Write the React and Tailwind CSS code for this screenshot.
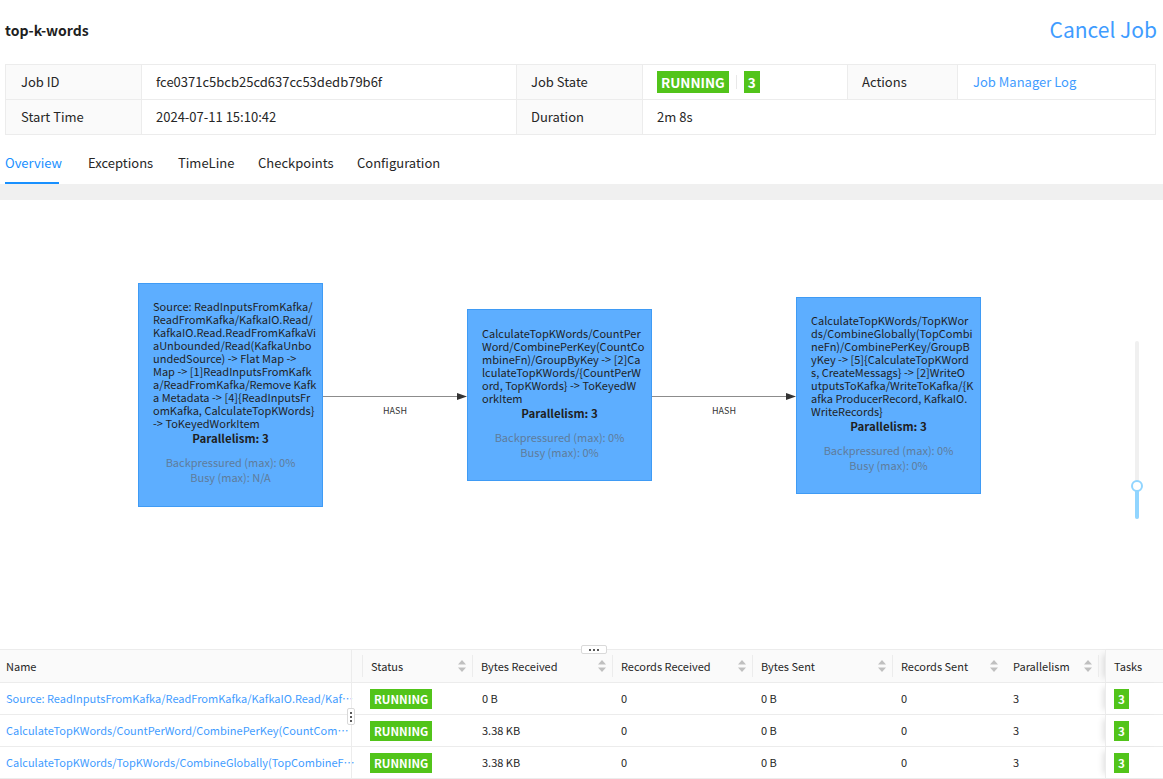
import React from 'react'

const NODES = [
  {
    w: 'w-[185px]',
    h: 'h-[224px]',
    pt: 'pt-[16px]',
    lines: [
      'Source: ReadInputsFromKafka/',
      'ReadFromKafka/KafkaIO.Read/',
      'KafkaIO.Read.ReadFromKafkaVi',
      'aUnbounded/Read(KafkaUnbo',
      'undedSource) -> Flat Map ->',
      'Map -> [1]ReadInputsFromKafk',
      'a/ReadFromKafka/Remove Kafk',
      'a Metadata -> [4]{ReadInputsFr',
      'omKafka, CalculateTopKWords}',
      '-> ToKeyedWorkItem',
    ],
    busy: 'N/A',
  },
  {
    w: 'w-[185px]',
    h: 'h-[172px]',
    pt: 'pt-[17px]',
    lines: [
      'CalculateTopKWords/CountPer',
      'Word/CombinePerKey(CountCo',
      'mbineFn)/GroupByKey -> [2]Ca',
      'lculateTopKWords/{CountPerW',
      'ord, TopKWords} -> ToKeyedW',
      'orkItem',
    ],
    busy: '0%',
  },
  {
    w: 'w-[185px]',
    h: 'h-[197px]',
    pt: 'pt-[16px]',
    lines: [
      'CalculateTopKWords/TopKWor',
      'ds/CombineGlobally(TopCombi',
      'neFn)/CombinePerKey/GroupB',
      'yKey -> [5]{CalculateTopKWord',
      's, CreateMessags} -> [2]WriteO',
      'utputsToKafka/WriteToKafka/{K',
      'afka ProducerRecord, KafkaIO.',
      'WriteRecords}',
    ],
    busy: '0%',
  },
]

const ROWS = [
  { name: 'Source: ReadInputsFromKafka/ReadFromKafka/KafkaIO.Read/KafkaIO.Read.ReadFromKafkaViaUnbounded/Read(KafkaUnboundedSource)', br: '0 B' },
  { name: 'CalculateTopKWords/CountPerWord/CombinePerKey(CountCombineFn)/GroupByKey', br: '3.38 KB' },
  { name: 'CalculateTopKWords/TopKWords/CombineGlobally(TopCombineFn)/CombinePerKey/GroupByKey', br: '3.38 KB' },
]

const COLS = 'grid grid-cols-[363px_110px_140px_140px_140px_112px_94px_6px_58px]'

function GraphNode({ node }) {
  return (
    <div className={`${node.w} ${node.h} ${node.pt} shrink-0 bg-[#5daeff] border border-[#3f9bf5] pl-[14px] pr-[4px] text-[11px] text-[#1f1f1f]`}>
      <div className="leading-[13px]">
        {node.lines.map((l) => (
          <div key={l} className="whitespace-nowrap">{l}</div>
        ))}
      </div>
      <div className="mt-[2px] leading-[13px] font-bold text-[11.5px] text-center pr-[10px]">Parallelism: 3</div>
      <div className="mt-[10px] leading-[15px] text-center text-[#5f7c9b] pr-[10px]">
        <div>Backpressured (max): 0%</div>
        <div>Busy (max): {node.busy}</div>
      </div>
    </div>
  )
}

function Edge() {
  return (
    <div className="relative w-[144px] shrink-0 h-[30px] mt-[31px]">
      <div className="absolute left-0 right-[8px] top-0 h-px bg-[#8c8c8c]" />
      <svg className="absolute right-0 -top-[3px]" width="10" height="7" viewBox="0 0 10 7">
        <polygon points="0,0 10,3.5 0,7" fill="#333" />
      </svg>
      <div className="absolute inset-x-0 top-[10px] text-center text-[9px] leading-[10px] text-[#333]">HASH</div>
    </div>
  )
}

function SortIcon() {
  return (
    <svg width="8" height="12" viewBox="0 0 8 12">
      <polygon points="4,0 8,4.5 0,4.5" fill="#bfbfbf" />
      <polygon points="0,7.5 8,7.5 4,12" fill="#bfbfbf" />
    </svg>
  )
}

function Th({ label, sort = true, sep = true }) {
  return (
    <div className="relative flex items-center justify-between pl-[8px] pr-[7px] h-full">
      <span className="whitespace-nowrap">{label}</span>
      {sort && <SortIcon />}
      {sep && <div className="absolute right-0 top-1/2 -translate-y-1/2 h-[22px] w-px bg-[#ececec]" />}
    </div>
  )
}

function Tag({ children, big }) {
  return (
    <span
      className={
        big
          ? 'inline-flex items-center h-[22px] px-[4px] bg-[#52c41a] text-white font-bold text-[13.5px] leading-[22px]'
          : 'inline-flex items-center h-[20px] px-[4px] bg-[#52c41a] text-white font-bold text-[11.5px] leading-[20px]'
      }
    >
      {children}
    </span>
  )
}

export default function App() {
  return (
    <div className="w-[1163px] h-[779px] overflow-hidden bg-white font-['Noto_Sans_CJK_SC','Liberation_Sans',sans-serif] text-[#262626]">
      {/* Header */}
      <div className="h-[64px] flex items-center justify-between pl-[5px] pr-[6px]">
        <div className="text-[14px] font-bold text-[#1f1f1f] pb-[3px]">top-k-words</div>
        <button className="text-[21px] text-[#3f9cff] leading-none pb-[6px]">Cancel Job</button>
      </div>

      {/* Descriptions */}
      <div className="mx-[5px] w-[1151px] border border-[#ececec] text-[13px]">
        <div className="grid grid-cols-[136px_375px_126px_205px_110px_1fr] h-[35px] border-b border-[#ececec]">
          <div className="bg-[#fafafa] border-r border-[#ececec] flex items-center pl-[15px]">Job ID</div>
          <div className="border-r border-[#ececec] flex items-center pl-[14px]">fce0371c5bcb25cd637cc53dedb79b6f</div>
          <div className="bg-[#fafafa] border-r border-[#ececec] flex items-center pl-[14px]">Job State</div>
          <div className="border-r border-[#ececec] flex items-center pl-[14px]">
            <Tag big>RUNNING</Tag>
            <span className="mx-[7px] w-px h-[14px] bg-[#e8e8e8]" />
            <Tag big>3</Tag>
          </div>
          <div className="bg-[#fafafa] border-r border-[#ececec] flex items-center pl-[14px]">Actions</div>
          <div className="flex items-center pl-[15px] text-[#3f9cff]">Job Manager Log</div>
        </div>
        <div className="grid grid-cols-[136px_375px_126px_205px_110px_1fr] h-[34px]">
          <div className="bg-[#fafafa] border-r border-[#ececec] flex items-center pl-[15px]">Start Time</div>
          <div className="border-r border-[#ececec] flex items-center pl-[14px]">2024-07-11 15:10:42</div>
          <div className="bg-[#fafafa] border-r border-[#ececec] flex items-center pl-[14px]">Duration</div>
          <div className="col-span-3 flex items-center pl-[14px]">2m 8s</div>
        </div>
      </div>

      {/* Tabs */}
      <div className="flex gap-[29px] pl-[5px] pt-[18px] text-[13px]">
        {[
          ['Overview', 'w-[54px]'],
          ['Exceptions', 'w-[61px]'],
          ['TimeLine', 'w-[51px]'],
          ['Checkpoints', 'w-[70px]'],
          ['Configuration', 'w-[79px]'],
        ].map(([t, w], i) => (
          <div
            key={t}
            className={`${w} whitespace-nowrap leading-[20px] pb-[9px] border-b-2 ${
              i === 0 ? 'border-[#1890ff] text-[#1890ff]' : 'border-transparent text-[#262626]'
            }`}
          >
            {t}
          </div>
        ))}
      </div>
      <div className="h-[16px] bg-[#f0f0f0]" />

      {/* Graph canvas */}
      <div className="relative h-[449px] bg-white">
        <div className="absolute left-[138px] top-[83px] flex items-center">
          <GraphNode node={NODES[0]} />
          <Edge />
          <GraphNode node={NODES[1]} />
          <Edge />
          <GraphNode node={NODES[2]} />
        </div>

        {/* zoom slider */}
        <div className="absolute left-[1135px] top-[141px] w-[4px] h-[178px] rounded-full bg-[#f0f0f0]">
          <div className="absolute left-0 bottom-0 w-[4px] h-[33px] rounded-full bg-[#91d5ff]" />
          <div className="absolute -left-[4px] top-[139px] w-[12px] h-[12px] rounded-full bg-white border-2 border-[#91d5ff]" />
        </div>
      </div>

      {/* Vertex table */}
      <div className="relative border-t border-[#ececec] text-[11px]">
        <div className="absolute left-[581px] -top-[5px] w-[26px] h-[9px] bg-white border border-[#d9d9d9] rounded-[2px] flex items-center justify-center gap-[2px] z-10">
          <span className="w-[2px] h-[2px] bg-[#595959]" />
          <span className="w-[2px] h-[2px] bg-[#595959]" />
          <span className="w-[2px] h-[2px] bg-[#595959]" />
        </div>
        <div className="absolute left-[351px] top-0 bottom-0 w-px bg-[#ececec] z-10" />
        <div className="absolute left-[347px] top-[58px] w-[8px] h-[17px] bg-white border border-[#d9d9d9] rounded-[2px] flex flex-col items-center justify-center gap-[2px] z-20">
          <span className="w-[2px] h-[2px] bg-[#595959]" />
          <span className="w-[2px] h-[2px] bg-[#595959]" />
          <span className="w-[2px] h-[2px] bg-[#595959]" />
        </div>

        <div className={`${COLS} h-[33px] bg-[#fafafa] border-b border-[#ececec] text-[#262626]`}>
          <div className="relative flex items-center pl-[6px]">
            Name
            <div className="absolute right-0 top-1/2 -translate-y-1/2 h-[22px] w-px bg-[#ececec]" />
          </div>
          <Th label="Status" />
          <Th label="Bytes Received" />
          <Th label="Records Received" />
          <Th label="Bytes Sent" />
          <Th label="Records Sent" sep={false} />
          <Th label="Parallelism" />
          <div />
          <div className="flex items-center pl-[8px] bg-[#fafafa] border-l border-[#ececec] shadow-[-6px_0_6px_-4px_rgba(0,0,0,0.12)]">Tasks</div>
        </div>

        {ROWS.map((r) => (
          <div key={r.name} className={`${COLS} h-[32px] border-b border-[#ececec]`}>
            <div className="flex items-center pl-[6px] pr-[8px] min-w-0">
              <span className="truncate text-[#3f9cff]">{r.name}</span>
            </div>
            <div className="flex items-center pl-[7px]">
              <Tag>RUNNING</Tag>
            </div>
            <div className="flex items-center pl-[9px]">{r.br}</div>
            <div className="flex items-center pl-[8px]">0</div>
            <div className="flex items-center pl-[8px]">0 B</div>
            <div className="flex items-center pl-[8px]">0</div>
            <div className="flex items-center pl-[8px]">3</div>
            <div />
            <div className="flex items-center pl-[8px] bg-white border-l border-[#ececec] shadow-[-6px_0_6px_-4px_rgba(0,0,0,0.12)]">
              <Tag>3</Tag>
            </div>
          </div>
        ))}
      </div>
    </div>
  )
}
